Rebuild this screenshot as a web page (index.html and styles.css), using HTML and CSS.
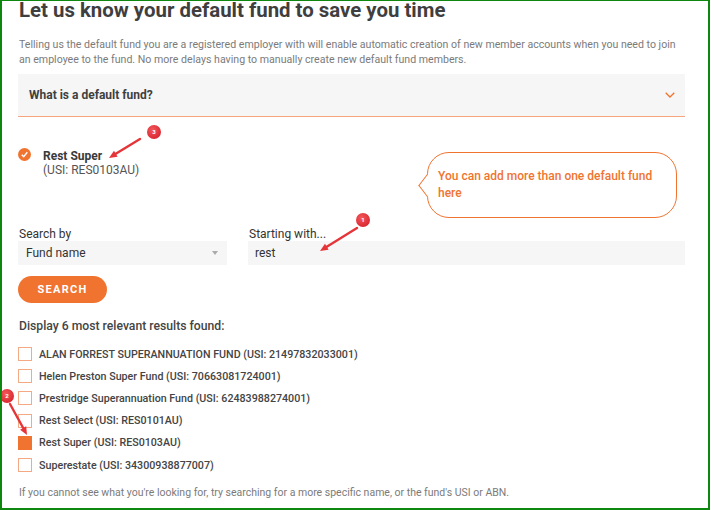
FILE: index.html
```html
<!DOCTYPE html>
<html lang="en">
<head>
    <meta charset="UTF-8">
    <meta name="viewport" content="width=device-width, initial-scale=1.0">
    <title>Default fund</title>

    <link rel="stylesheet" href="styles.css">
</head>
<body>

    <div class="frame">

        <!-- Heading & intro -->
        <h1 class="title">Let us know your default fund to save you time</h1>
        <p class="intro">Telling us the default fund you are a registered employer with will enable automatic creation of new member accounts when you need to join an employee to the fund. No more delays having to manually create new default fund members.</p>

        <!-- Accordion -->
        <div class="accordion">
            <span>What is a default fund?</span>
            <svg class="chevron" width="10" height="6" viewBox="0 0 10 6">
                <polyline points="0.7,0.7 5,5 9.3,0.7" fill="none" stroke="#f07430" stroke-width="1.3"/>
            </svg>
        </div>

        <!-- Chosen fund + tip -->
        <div class="chosen-row">
            <div class="chosen">
                <span class="tick">
                    <svg width="13" height="13" viewBox="0 0 13 13">
                        <circle cx="6.5" cy="6.5" r="6.5" fill="#f07430"/>
                        <polyline points="3.8,6.8 5.7,8.8 9.3,4.2" fill="none" stroke="#fff" stroke-width="1.4"/>
                    </svg>
                </span>
                <div>
                    <div class="chosen-name">Rest Super</div>
                    <div class="chosen-usi">(USI: RES0103AU)</div>
                </div>
            </div>
            <div class="bubble">You can add more than one default fund here</div>
        </div>

        <!-- Search form -->
        <div class="search-fields">
            <div class="field field-type">
                <label>Search by</label>
                <div class="select">
                    <span>Fund name</span>
                    <span class="caret"></span>
                </div>
            </div>
            <div class="field field-term">
                <label>Starting with...</label>
                <div class="input">rest</div>
            </div>
        </div>

        <button class="search-btn">SEARCH</button>

        <!-- Results -->
        <div class="results-title">Display 6 most relevant results found:</div>
        <ul class="results">
            <li><span class="box"></span>ALAN FORREST SUPERANNUATION FUND (USI: 21497832033001)</li>
            <li><span class="box"></span>Helen Preston Super Fund (USI: 70663081724001)</li>
            <li><span class="box"></span>Prestridge Superannuation Fund (USI: 62483988274001)</li>
            <li><span class="box"></span>Rest Select (USI: RES0101AU)</li>
            <li><span class="box checked"></span>Rest Super (USI: RES0103AU)</li>
            <li><span class="box"></span>Superestate (USI: 34300938877007)</li>
        </ul>

        <p class="hint">If you cannot see what you're looking for, try searching for a more specific name, or the fund's USI or ABN.</p>

        <!-- Red callouts drawn over the page -->
        <svg class="marks" width="710" height="510" viewBox="0 0 710 510">
            <defs>
                <radialGradient id="dot" cx="40%" cy="35%" r="70%">
                    <stop offset="0" stop-color="#f2585c"/>
                    <stop offset="1" stop-color="#d9252e"/>
                </radialGradient>
            </defs>

            <line x1="138" y1="138" x2="113.8" y2="152.8" stroke="#e53539" stroke-width="2.4" stroke-linecap="round"/>
            <polygon points="107,157 112,149.8 115.6,155.8" fill="#e53539"/>
            <circle cx="152" cy="131" r="7" fill="url(#dot)"/>
            <text x="152" y="133.2" class="mark-num">3</text>

            <line x1="355" y1="227" x2="324.8" y2="245.8" stroke="#e53539" stroke-width="2.4" stroke-linecap="round"/>
            <polygon points="318,250 323,242.8 326.6,248.8" fill="#e53539"/>
            <circle cx="361" cy="219" r="7" fill="url(#dot)"/>
            <text x="361" y="221.2" class="mark-num">1</text>

            <line x1="8" y1="403" x2="21.2" y2="427" stroke="#e53539" stroke-width="2.4" stroke-linecap="round"/>
            <polygon points="25,434 18.1,428.7 24.2,425.3" fill="#e53539"/>
            <circle cx="5" cy="395" r="7" fill="url(#dot)"/>
            <text x="5" y="397.2" class="mark-num">2</text>
        </svg>
    </div>

</body>
</html>
```
FILE: styles.css
```css
body {
    font-family: Roboto, "Liberation Sans", sans-serif;
    margin: 0;
    padding: 0;
    background-color: #fff;
}

/* 🔹 Green screenshot frame */
.frame {
    position: relative;
    width: 710px;
    height: 510px;
    box-sizing: border-box;
    border: 2px solid #0d870d;
    border-top-width: 1px;
    padding: 0 23px 0 16px;
    overflow: hidden;
}

/* 🔹 Heading */
.title {
    font-size: 20.4px;
    font-weight: 700;
    line-height: 22px;
    color: #3f3f3f;
    margin: -2px 0 0 1px;
    white-space: nowrap;
}

.intro {
    font-size: 10.6px;
    line-height: 15px;
    color: #7b7b7b;
    margin: 16px 0 0 1px;
}

/* 🔹 Accordion */
.accordion {
    display: flex;
    align-items: center;
    justify-content: space-between;
    height: 42px;
    margin-top: 7px;
    padding: 0 10px 0 11px;
    background-color: #f6f6f6;
    border-bottom: 1px solid #f6a57c;
    font-size: 12px;
    font-weight: 700;
    color: #3f3f3f;
}

.chevron {
    display: block;
}

/* 🔹 Chosen fund */
.chosen-row {
    display: flex;
    justify-content: space-between;
    align-items: flex-start;
    margin-top: 31px;
    padding-right: 8px;
}

.chosen {
    display: flex;
    align-items: flex-start;
    gap: 12px;
    font-size: 12px;
    line-height: 14px;
    color: #444;
}

.tick svg {
    display: block;
}

.chosen-name {
    margin-top: 1px;
    font-weight: 700;
    color: #3a3a3a;
}

.chosen-usi {
    color: #555;
}

.bubble {
    position: relative;
    width: 250px;
    box-sizing: border-box;
    margin-top: 4px;
    padding: 15px 9px 15px 10px;
    border: 1.5px solid #f07430;
    border-radius: 22px;
    font-size: 12px;
    font-weight: 500;
    line-height: 17px;
    color: #f07430;
}

.bubble::before {
    content: "";
    position: absolute;
    left: -8px;
    top: 25px;
    width: 14px;
    height: 14px;
    background: #fff;
    border-left: 1.5px solid #f07430;
    border-bottom: 1.5px solid #f07430;
    transform: rotate(45deg) skew(8deg, 8deg);
}

/* 🔹 Search form */
.search-fields {
    display: flex;
    gap: 21px;
    margin-top: 9px;
}

.field label {
    display: block;
    font-size: 12px;
    line-height: 14px;
    color: #333;
    margin: 0 0 0 1px;
}

.field-type {
    width: 209px;
}

.field-term {
    flex: 1;
}

.select,
.input {
    display: flex;
    align-items: center;
    justify-content: space-between;
    height: 24px;
    background-color: #f6f6f6;
    font-size: 12px;
    color: #333;
}

.select {
    padding: 0 8px;
}

.input {
    padding: 0 7px;
}

.caret {
    width: 0;
    height: 0;
    margin-right: 1px;
    border-left: 3.5px solid transparent;
    border-right: 3.5px solid transparent;
    border-top: 4px solid #aaa;
}

.search-btn {
    display: block;
    width: 89px;
    height: 27px;
    margin-top: 11px;
    padding: 0;
    border: none;
    border-radius: 14px;
    background-color: #f07430;
    color: #fff;
    font-family: Roboto, "Liberation Sans", sans-serif;
    font-size: 11px;
    font-weight: 700;
    letter-spacing: 1.3px;
}

/* 🔹 Results */
.results-title {
    margin: 16px 0 0 1px;
    font-size: 12.2px;
    font-weight: 500;
    line-height: 15px;
    color: #444;
}

.results {
    list-style: none;
    margin: 9px 0 0;
    padding: 0;
}

.results li {
    display: flex;
    align-items: center;
    gap: 7px;
    height: 22.2px;
    font-size: 10.7px;
    font-weight: 500;
    color: #444;
}

.box {
    width: 14px;
    height: 14px;
    box-sizing: border-box;
    border: 1px solid #f3a983;
}

.box.checked {
    background-color: #f07430;
    border-color: #f07430;
}

.hint {
    margin: 9px 0 0 1px;
    font-size: 10.5px;
    line-height: 15px;
    color: #7b7b7b;
}

/* 🔹 Callout overlay */
.marks {
    position: absolute;
    top: 0;
    left: 0;
    pointer-events: none;
}

.mark-num {
    font-family: Roboto, sans-serif;
    font-size: 6px;
    font-weight: 700;
    fill: #fff;
    text-anchor: middle;
}
```
